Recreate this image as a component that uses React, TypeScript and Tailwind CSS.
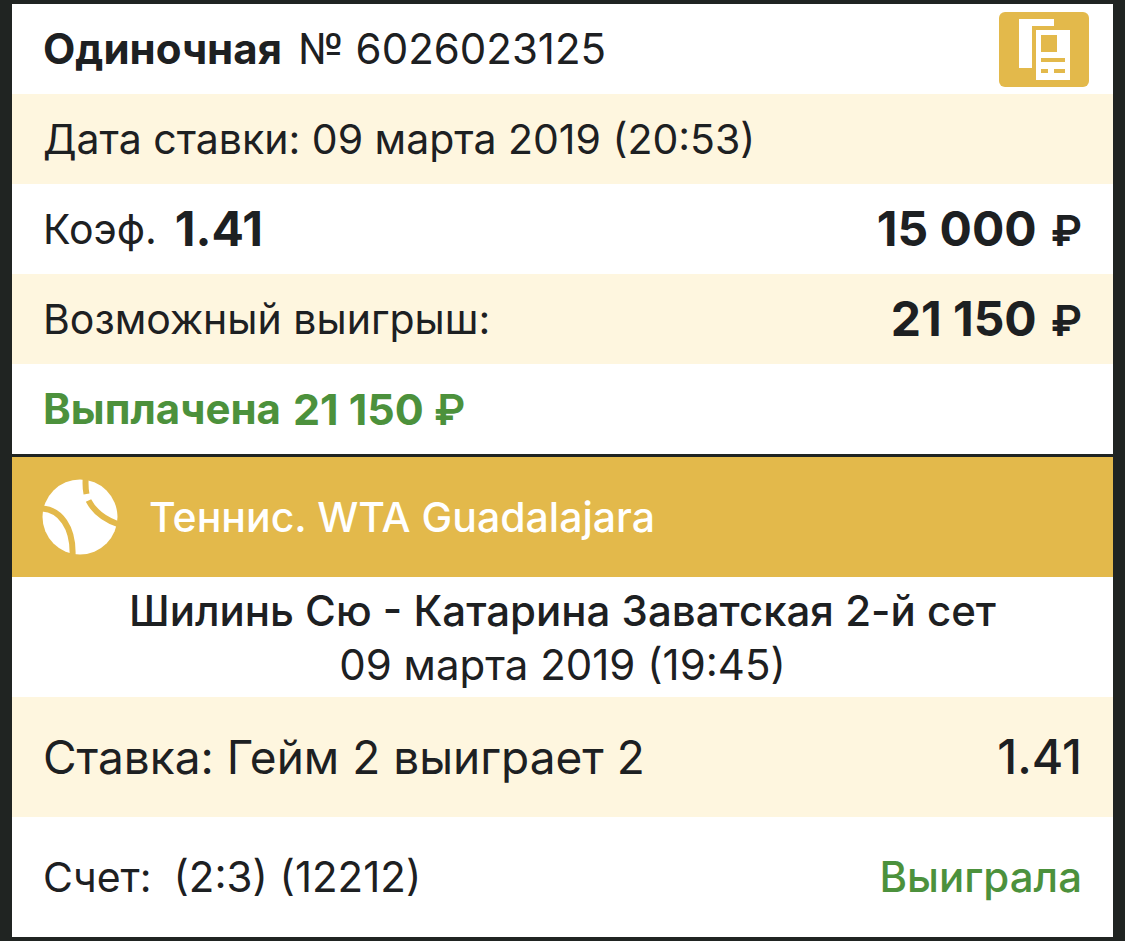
import React from "react";

const ROW = "flex items-center justify-between px-[31px]";

function CopyIcon() {
  return (
    <svg viewBox="0 0 90 75" className="h-[75px] w-[90px]" fill="none" aria-hidden="true">
      <path d="M20 7h35v7H33v42H20z" fill="#fff" />
      <path d="M37 18h34v50H37z" fill="#fff" />
      <path d="M42 23h16v17H42zM42 46h24v4H42zM42 57h7v4h-7zM55 57h11v4H55z" fill="#e3b94b" />
    </svg>
  );
}

function TennisBall() {
  return (
    <svg viewBox="0 0 76 76" className="h-[76px] w-[76px]" aria-hidden="true">
      <circle cx="38" cy="38" r="37.5" fill="#fff" />
      <path
        d="M-1 29.5C18 30 32 48 30.5 78M43.8 -2Q43 7 44.5 15M46.5 21.5Q55 38 77 45.5"
        stroke="#e3b94b"
        strokeWidth="6"
        fill="none"
      />
    </svg>
  );
}

function Amount({ value }: { value: string }) {
  return (
    <b className="flex items-baseline gap-[14px] text-[48px]">
      {value} <span className="text-[43px] font-semibold">₽</span>
    </b>
  );
}

export default function App() {
  return (
    <div className="min-h-screen bg-[#202422] px-3 py-1 font-['Inter',sans-serif] text-[41px] leading-[54px] whitespace-nowrap text-[#1d2022]">
      <section className="bg-white">
        <header className={`${ROW} h-[90px] text-[42px]`}>
          <h1 className="flex gap-4"><b className="font-bold">Одиночная</b> <span>№ 6026023125</span></h1>
          <button aria-label="Копировать" className="-mr-[7px] rounded-md bg-[#e3b94b]"><CopyIcon /></button>
        </header>
        <div className={`${ROW} h-[90px] bg-[#fef6df]`}>Дата ставки: 09 марта 2019 (20:53)</div>
        <div className={`${ROW} h-[90px]`}>
          <span className="flex items-center gap-[18px]">Коэф. <b className="text-[48px]">1.41</b></span>
          <Amount value="15 000" />
        </div>
        <div className={`${ROW} h-[90px] bg-[#fef6df]`}>
          <span>Возможный выигрыш:</span>
          <Amount value="21 150" />
        </div>
        <div className={`${ROW} h-[90px] text-[42px] font-bold text-[#4c913c]`}>
          <span className="flex gap-3">Выплачена <span className="text-[43px]">21 150 <span className="font-semibold">₽</span></span></span>
        </div>
      </section>
      <section className="mt-[3px] bg-white">
        <h2 className="flex h-[120px] items-center gap-[31px] bg-[#e3b94b] px-[30px] font-medium text-white">
          <TennisBall />
          Теннис. WTA Guadalajara
        </h2>
        <div className="h-[120px] pt-[7px] text-center text-[42px]">
          <p className="font-medium">Шилинь Сю - Катарина Заватская 2-й сет</p>
          <p>09 марта 2019 (19:45)</p>
        </div>
        <div className={`${ROW} h-[120px] bg-[#fef6df] text-[46px]`}>
          <span>Ставка: Гейм 2 выиграет 2</span>
          <span className="text-[48px] font-medium">1.41</span>
        </div>
        <div className={`${ROW} h-[120px]`}>
          <span className="flex gap-[22px]">Счет: <span className="text-[42px]">(2:3) (12212)</span></span>
          <span className="text-[42px] font-medium text-[#4c913c]">Выиграла</span>
        </div>
      </section>
    </div>
  );
}
